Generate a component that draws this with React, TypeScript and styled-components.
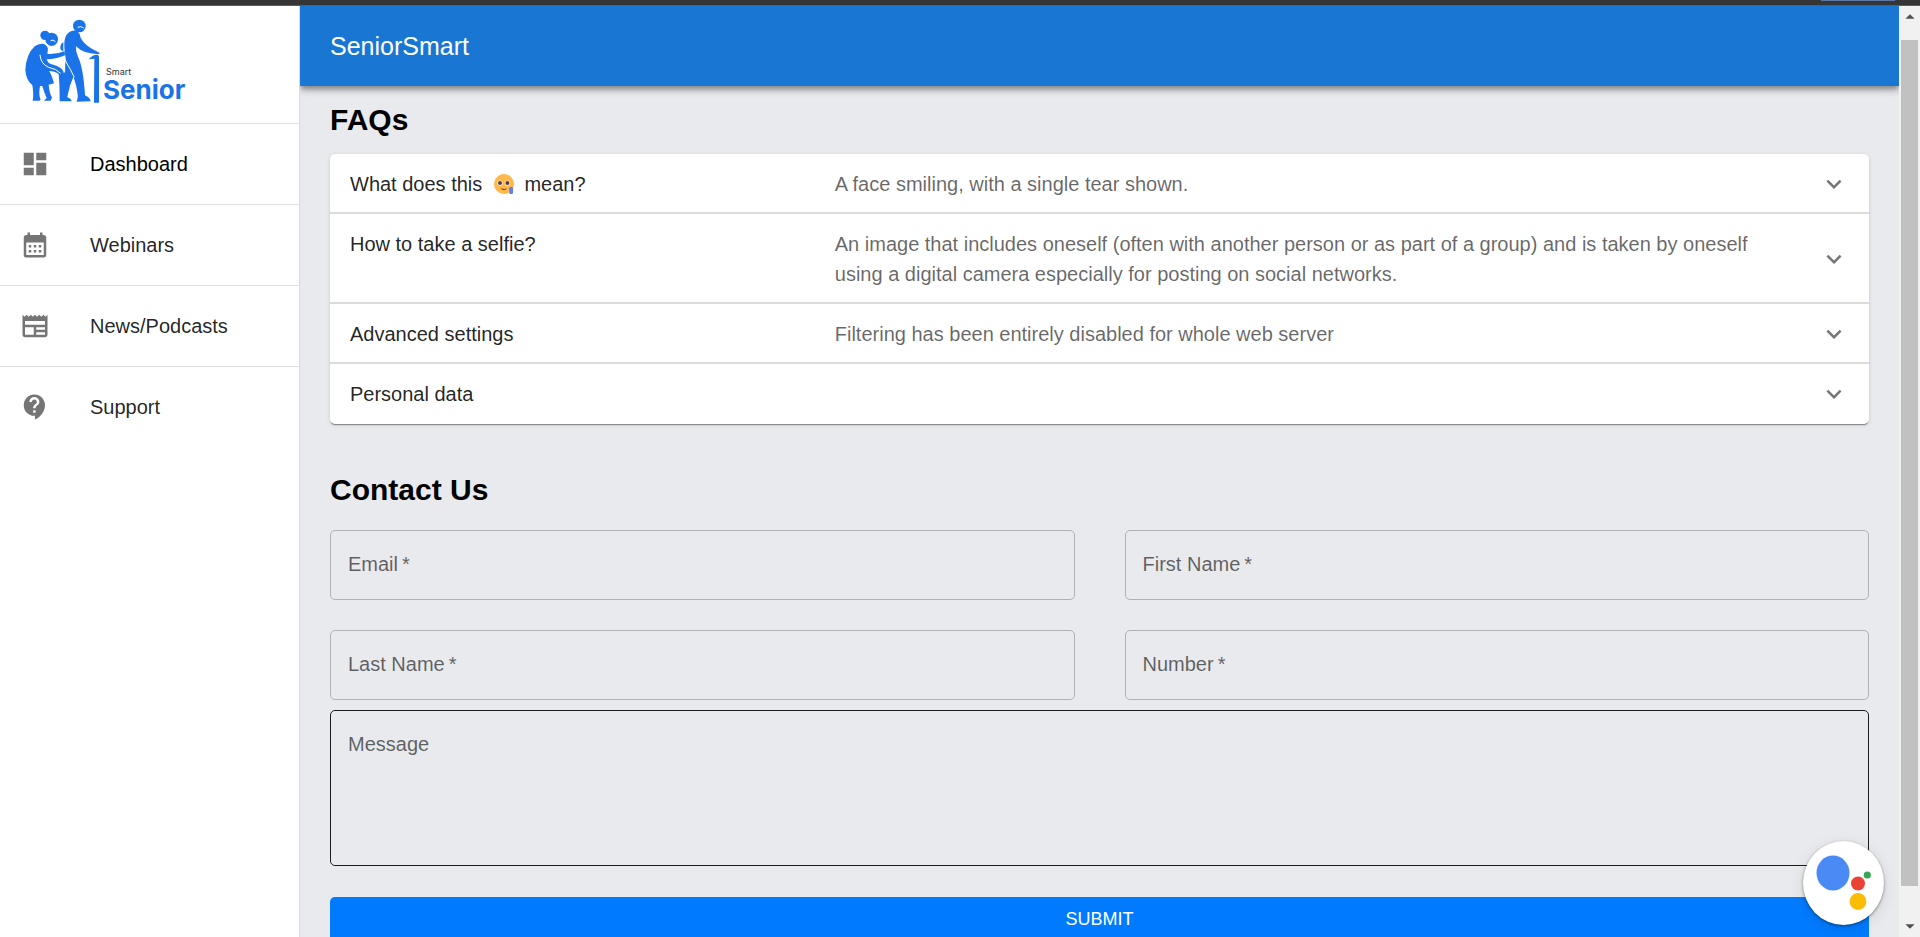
import React from "react";
import styled, { createGlobalStyle } from "styled-components";
import {
  MdArrowDropDown,
  MdArrowDropUp,
  MdCalendarMonth,
  MdContactSupport,
  MdDashboard,
  MdExpandMore,
  MdNewspaper,
} from "react-icons/md";

const GlobalStyle = createGlobalStyle`
  * { box-sizing: border-box; }
  body {
    margin: 0;
    overflow: hidden;
    background: #e8eaed;
    color: rgba(0, 0, 0, 0.87);
    font-family: "Liberation Sans", Arial, sans-serif;
    font-size: 20px;
    line-height: 30px;
  }
`;

const Shell = styled.div`
  height: 100vh;
  display: flex;
  flex-direction: column;
`;

const WindowEdge = styled.div`
  height: 6px;
  flex: none;
  display: flex;
  justify-content: flex-end;
  padding-right: 25px;
  background: #353535;
  border-bottom: 1px solid #5c5c5c;
`;

const TabEdge = styled.span`
  width: 74px;
  height: 1px;
  background: #5b76a3;
`;

const Layout = styled.div`
  flex: 1;
  min-height: 0;
  display: flex;
`;

const Sidebar = styled.nav`
  width: 300px;
  flex: none;
  background: #fff;
  border-right: 1px solid #dcdcdc;
`;

const LogoArea = styled.div`
  height: 118px;
  padding: 8px 20px;
  border-bottom: 1px solid #dfdfdf;
`;

const NavList = styled.ul`
  list-style: none;
  margin: 0;
  padding: 0;
`;

const NavItem = styled.li`
  border-bottom: 1px solid #dfdfdf;
  &:last-child { border-bottom: 0; }
`;

const NavLink = styled.a<{ $active?: boolean }>`
  height: 80px;
  padding: 0 20px;
  display: flex;
  align-items: center;
  gap: 40px;
  color: ${(p) => (p.$active ? "#000" : "rgba(0, 0, 0, 0.87)")};
  text-decoration: none;
  svg {
    width: 30px;
    height: 30px;
    color: #757575;
  }
`;

const Page = styled.div`
  flex: 1;
  min-width: 0;
  overflow: hidden;
`;

const AppBar = styled.header`
  height: 80px;
  padding: 0 30px;
  display: flex;
  align-items: center;
  background: #1976d2;
  color: #fff;
  font-size: 25px;
  box-shadow: 0 3px 5px -1px rgba(0, 0, 0, 0.3), 0 5px 6px rgba(0, 0, 0, 0.16),
    0 1px 12px rgba(0, 0, 0, 0.12);
`;

const Content = styled.main`
  padding: 16px 30px;
`;

const Heading = styled.h1`
  margin: 0;
  font-size: 30px;
  line-height: 36px;
  font-weight: 700;
  color: #000;
`;

const Accordion = styled.div`
  margin: 16px 0 48px;
  background: #fff;
  border-radius: 5px;
  box-shadow: 0 2px 1px -1px rgba(0, 0, 0, 0.3), 0 1px 1px rgba(0, 0, 0, 0.14),
    0 1px 4px rgba(0, 0, 0, 0.12);
`;

const Summary = styled.button`
  width: 100%;
  padding: 15px 20px;
  display: flex;
  align-items: center;
  border: 0;
  background: none;
  color: inherit;
  font: inherit;
  text-align: left;
  cursor: pointer;
  &:not(:last-child) { box-shadow: inset 0 -2px #dcdcdc; }
  > svg {
    width: 30px;
    height: 30px;
    flex: none;
    color: #757575;
  }
`;

const SummaryText = styled.span`
  flex: 1;
  display: flex;
`;

const Question = styled.span`
  width: 33%;
  flex: none;
`;

const Answer = styled.span`
  padding-right: 30px;
  color: rgba(0, 0, 0, 0.6);
`;

const Emoji = styled.svg`
  width: 20px;
  height: 20px;
  margin: 0 5px 0 6px;
  vertical-align: -3px;
`;

const Form = styled.form`
  margin-top: 22px;
  display: flex;
  flex-direction: column;
`;

const FieldGrid = styled.div`
  display: grid;
  grid-template-columns: 1fr 1fr;
  gap: 30px 50px;
  margin-bottom: 10px;
`;

const Field = styled.div`
  position: relative;
`;

const Label = styled.label`
  position: absolute;
  top: 20px;
  left: 18px;
  line-height: 28px;
  color: rgba(0, 0, 0, 0.6);
  pointer-events: none;
`;

const Input = styled.input`
  display: block;
  width: 100%;
  height: 70px;
  padding: 0 17px;
  border: 1px solid #b1b2b6;
  border-radius: 5px;
  outline: 0;
  background: transparent;
  font: inherit;
  &:not(:placeholder-shown) + label { display: none; }
`;

const Message = styled.textarea`
  display: block;
  width: 100%;
  height: 156px;
  padding: 19px 17px;
  border: 1px solid #1d1d1e;
  border-radius: 5px;
  outline: 0;
  resize: none;
  background: transparent;
  font: inherit;
  &:not(:placeholder-shown) + label { display: none; }
`;

const Submit = styled.button`
  height: 44px;
  margin-top: 31px;
  border: 0;
  border-radius: 5px;
  background: #007bff;
  color: #fff;
  font: inherit;
  font-size: 18px;
  text-transform: uppercase;
`;

const ScrollTrack = styled.div`
  width: 21px;
  flex: none;
  display: flex;
  flex-direction: column;
  align-items: center;
  background: #f1f1f1;
  color: #505050;
  svg {
    width: 24px;
    height: 22px;
    flex: none;
  }
`;

const ScrollThumb = styled.div`
  width: 17px;
  flex: 1;
  margin: 12px 0 29px;
  background: #c1c1c1;
`;

const AssistantButton = styled.button`
  position: fixed;
  right: 36px;
  bottom: 12px;
  width: 81px;
  height: 84px;
  padding: 0;
  border: 0;
  border-radius: 50%;
  background: #fff;
  box-shadow: 0 1px 3px rgba(0, 0, 0, 0.45), 0 4px 16px rgba(0, 0, 0, 0.1);
  svg { display: block; }
`;

const Logo = () => (
  <svg width="190" height="92" viewBox="0 0 190 92" role="img" aria-label="Smart Senior">
    <g transform="scale(0.33333)" fill="#1a73e8">
      {/* woman */}
      <circle cx="75" cy="64" r="14" />
      <ellipse cx="95" cy="76" rx="19" ry="20" />
      <path d="M44 97 Q58 86 72 90 Q88 96 82 120 Q108 122 134 112 L135 124 Q108 136 80 136 Q83 150 100 152 Q124 158 130 172 L128 190 Q112 172 88 171 Q98 190 102 208 Q90 212 86 212 Q88 238 96 250 L92 260 L72 260 L80 252 Q72 234 67 216 L60 216 Q56 240 60 252 Q64 258 58 260 L38 260 Q42 240 37 214 Q18 198 16 168 Q18 122 44 97Z" />
      {/* man */}
      <circle cx="178" cy="36" r="19" />
      <path d="M140 62 Q152 48 168 50 Q180 54 182 72 Q194 96 238 116 L238 121 Q190 120 168 97 Q166 112 174 128 Q190 160 195 244 Q210 250 212 262 L170 263 Q176 248 172 234 Q166 190 140 150 Q132 110 133 88 Q134 70 140 62Z" />
      <path d="M136 140 Q146 156 162 188 Q146 222 142 250 Q154 254 155 262 L119 262 Q119 210 116 180 Q122 172 133 176Z" />
      <path d="M130 84 Q120 90 121 104 Q124 110 130 112Z" />
      {/* cane */}
      <path d="M206 136 Q222 120 234 123 L237 128 L237 266 L222 266 L223 134Z" />
      <path
        d="M92 80 Q99 75 106 83 M173 40 Q182 35 191 42 M60 122 Q62 150 86 160 Q108 164 122 178 M134 140 L134 175 M137 142 Q152 166 162 188 L150 220"
        fill="none"
        stroke="#fff"
        strokeWidth="3"
      />
    </g>
    <text x="86" y="61" fontFamily="Inter, sans-serif" fontSize="9" fill="#333">Smart</text>
    <text x="83" y="85" fontFamily="Inter, sans-serif" fontSize="26" fontWeight="700" fill="#1a73e8">Senior</text>
  </svg>
);

const HoldingTears = () => (
  <Emoji viewBox="0 0 20 20" role="img" aria-label="smiling face with tear">
    <circle cx="10" cy="10" r="10" fill="#ffb84a" />
    <circle cx="6" cy="9" r="2.6" fill="#fff" />
    <circle cx="13.4" cy="9" r="2.6" fill="#fff" />
    <circle cx="6" cy="9" r="2" fill="#543c40" />
    <circle cx="13.4" cy="9" r="2" fill="#543c40" />
    <path d="M7.4 14.6 Q10 16.6 12.4 14.6" fill="none" stroke="#7a4a30" strokeWidth="1.2" />
    <rect x="15.2" y="13" width="3.8" height="7" rx="1.2" fill="#5b7dff" />
  </Emoji>
);

const navItems = [
  { label: "Dashboard", Icon: MdDashboard, active: true },
  { label: "Webinars", Icon: MdCalendarMonth },
  { label: "News/Podcasts", Icon: MdNewspaper },
  { label: "Support", Icon: MdContactSupport },
];

const faqs: { question: React.ReactNode; answer?: string }[] = [
  {
    question: (
      <>
        What does this <HoldingTears /> mean?
      </>
    ),
    answer: "A face smiling, with a single tear shown.",
  },
  {
    question: "How to take a selfie?",
    answer:
      "An image that includes oneself (often with another person or as part of a group) and is taken by oneself using a digital camera especially for posting on social networks.",
  },
  {
    question: "Advanced settings",
    answer: "Filtering has been entirely disabled for whole web server",
  },
  { question: "Personal data" },
];

const fields = [
  { id: "email", label: "Email", type: "email" },
  { id: "firstName", label: "First Name", type: "text" },
  { id: "lastName", label: "Last Name", type: "text" },
  { id: "number", label: "Number", type: "tel" },
];

export default function App() {
  return (
    <Shell>
      <GlobalStyle />
      <WindowEdge>
        <TabEdge />
      </WindowEdge>
      <Layout>
        <Sidebar>
          <LogoArea>
            <Logo />
          </LogoArea>
          <NavList>
            {navItems.map(({ label, Icon, active }) => (
              <NavItem key={label}>
                <NavLink href="#" $active={active}>
                  <Icon />
                  {label}
                </NavLink>
              </NavItem>
            ))}
          </NavList>
        </Sidebar>
        <Page>
          <AppBar>SeniorSmart</AppBar>
          <Content>
            <Heading>FAQs</Heading>
            <Accordion>
              {faqs.map(({ question, answer }, i) => (
                <Summary key={i} type="button" aria-expanded={false}>
                  <SummaryText>
                    <Question>{question}</Question>
                    {answer && <Answer>{answer}</Answer>}
                  </SummaryText>
                  <MdExpandMore />
                </Summary>
              ))}
            </Accordion>
            <Heading as="h2">Contact Us</Heading>
            <Form onSubmit={(e) => e.preventDefault()}>
              <FieldGrid>
                {fields.map(({ id, label, type }) => (
                  <Field key={id}>
                    <Input id={id} type={type} placeholder=" " required />
                    <Label htmlFor={id}>{label}&thinsp;*</Label>
                  </Field>
                ))}
              </FieldGrid>
              <Field>
                <Message id="message" placeholder=" " />
                <Label htmlFor="message">Message</Label>
              </Field>
              <Submit type="submit">Submit</Submit>
            </Form>
          </Content>
        </Page>
        <ScrollTrack aria-hidden="true">
          <MdArrowDropUp />
          <ScrollThumb />
          <MdArrowDropDown />
        </ScrollTrack>
      </Layout>
      <AssistantButton type="button" aria-label="Assistant">
        <svg width="81" height="84" viewBox="0 0 81 84">
          <ellipse cx="30" cy="32" rx="16.5" ry="17.5" fill="#4a8af4" />
          <circle cx="55" cy="42.5" r="7" fill="#ea4335" />
          <circle cx="64.3" cy="34" r="3.6" fill="#34a853" />
          <circle cx="55" cy="60.5" r="8.4" fill="#fbbc05" />
        </svg>
      </AssistantButton>
    </Shell>
  );
}
